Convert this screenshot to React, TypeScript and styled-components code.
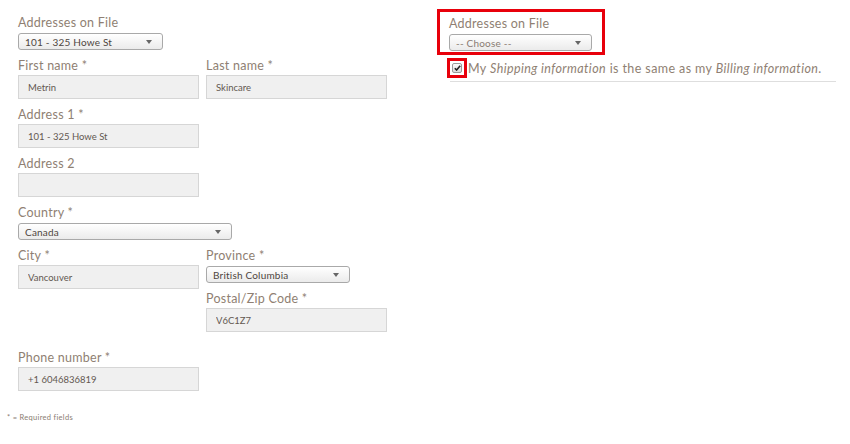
import styled, { createGlobalStyle } from "styled-components";

const GlobalStyle = createGlobalStyle`
  body {
    margin: 0;
    background: #fff;
    font-family: Lato, "Open Sans", sans-serif;
  }
`;

// 페이지 전체 (왼쪽 폼 + 오른쪽 패널)
const Page = styled.div`
  width: 850px;
  height: 444px;
  display: flex;
`;

const LeftForm = styled.div`
  width: 419px;
  padding: 14px 0 0 18px;
  display: flex;
  flex-direction: column;
`;

const Row = styled.div<{ $extraTop?: number }>`
  display: grid;
  grid-template-columns: 181px 181px;
  column-gap: 7px;
  margin-top: ${(p) => p.$extraTop ?? 0}px;
`;

const Column = styled.div`
  display: flex;
  flex-direction: column;
`;

const Field = styled.div<{ $span?: boolean }>`
  display: flex;
  flex-direction: column;
  margin-bottom: 7px;
  grid-column: ${(p) => (p.$span ? "1 / span 2" : "auto")};
`;

const Label = styled.label`
  height: 16px;
  line-height: 17px;
  font-size: 12.5px;
  letter-spacing: 0.25px;
  color: #8f7f73;
`;

const TextInput = styled.input`
  box-sizing: border-box;
  margin: 2px 0 0 0;
  width: 181px;
  height: 24px;
  padding: 0 9px;
  background: #f0f0f0;
  border: 1px solid #d6d6d6;
  font-family: Lato, sans-serif;
  font-size: 9.5px;
  color: #635851;
  outline: none;
`;

const SelectBox = styled.div<{ $width: number; $muted?: boolean }>`
  box-sizing: border-box;
  margin-top: 3px;
  width: ${(p) => p.$width}px;
  height: 17px;
  padding: 0 10px 0 6px;
  display: flex;
  align-items: center;
  justify-content: space-between;
  border: 1px solid #a9a9a9;
  border-radius: 3px;
  background: linear-gradient(#ffffff, #ebebeb);
  font-size: 10px;
  letter-spacing: 0.2px;
  color: ${(p) => (p.$muted ? "#8a7c72" : "#4e4540")};
`;

const Arrow = styled.svg`
  width: 6px;
  height: 4px;
  fill: #666;
  flex: none;
`;

const Note = styled.div`
  margin: 15px 0 0 -11px;
  font-size: 7.5px;
  letter-spacing: 0.3px;
  color: #8a7c72;
`;

const RightPanel = styled.div`
  padding-top: 9px;
  display: flex;
  flex-direction: column;
  width: 400px;
`;

const Highlight = styled.div`
  box-sizing: border-box;
  width: 168px;
  height: 46px;
  border: 3px solid #e8000b;
  padding: 3px 0 0 9px;
  display: flex;
  flex-direction: column;
`;

const SameAsRow = styled.div`
  display: flex;
  align-items: center;
  margin: 3px 0 0 13px;
  padding-bottom: 3px;
  border-bottom: 1px solid #dedede;
  width: 386px;
`;

const CheckFrame = styled.div`
  box-sizing: border-box;
  width: 20px;
  height: 20px;
  margin-left: -3px;
  border: 3px solid #e8000b;
  display: flex;
  align-items: center;
  justify-content: center;
  flex: none;
`;

const CheckBox = styled.div`
  box-sizing: border-box;
  width: 10px;
  height: 10px;
  border: 1px solid #9a9a9a;
  border-radius: 2px;
  background: linear-gradient(#fafafa, #dcdcdc);
  display: flex;
  align-items: center;
  justify-content: center;
`;

const SameAsText = styled.span`
  margin-left: 1px;
  font-size: 12.5px;
  letter-spacing: 0.4px;
  color: #8f7f73;
  white-space: nowrap;

  em {
    font-style: italic;
  }
`;

function Select({ value, width, muted }: { value: string; width: number; muted?: boolean }) {
  return (
    <SelectBox $width={width} $muted={muted}>
      <span>{value}</span>
      <Arrow viewBox="0 0 6 4">
        <polygon points="0,0 6,0 3,4" />
      </Arrow>
    </SelectBox>
  );
}

function Input({ label, value }: { label: string; value: string }) {
  return (
    <Field>
      <Label>{label}</Label>
      <TextInput readOnly value={value} />
    </Field>
  );
}

export default function App() {
  return (
    <>
      <GlobalStyle />
      <Page>
        <LeftForm>
          <Field>
            <Label>Addresses on File</Label>
            <Select value="101 - 325 Howe St" width={145} />
          </Field>
          <Row>
            <Input label="First name *" value="Metrin" />
            <Input label="Last name *" value="Skincare" />
          </Row>
          <Row>
            <Input label="Address 1 *" value="101 - 325 Howe St" />
          </Row>
          <Row>
            <Input label="Address 2" value="" />
          </Row>
          <Row>
            <Field $span>
              <Label>Country *</Label>
              <Select value="Canada" width={214} />
            </Field>
          </Row>
          <Row>
            <Input label="City *" value="Vancouver" />
            <Column>
              <Field>
                <Label>Province *</Label>
                <Select value="British Columbia" width={144} />
              </Field>
              <Input label="Postal/Zip Code *" value="V6C1Z7" />
            </Column>
          </Row>
          <Row $extraTop={10}>
            <Input label="Phone number *" value="+1 6046836819" />
          </Row>
          <Note>* = Required fields</Note>
        </LeftForm>
        <RightPanel>
          <Highlight>
            <Label>Addresses on File</Label>
            <Select value="-- Choose --" width={143} muted />
          </Highlight>
          <SameAsRow>
            <CheckFrame>
              <CheckBox>
                <svg width="7" height="6" viewBox="0 0 7 6">
                  <path d="M0.8 3.2 L2.6 5 L6.2 0.8" stroke="#222" strokeWidth="1.6" fill="none" />
                </svg>
              </CheckBox>
            </CheckFrame>
            <SameAsText>
              My <em>Shipping information</em> is the same as my <em>Billing information</em>.
            </SameAsText>
          </SameAsRow>
        </RightPanel>
      </Page>
    </>
  );
}
